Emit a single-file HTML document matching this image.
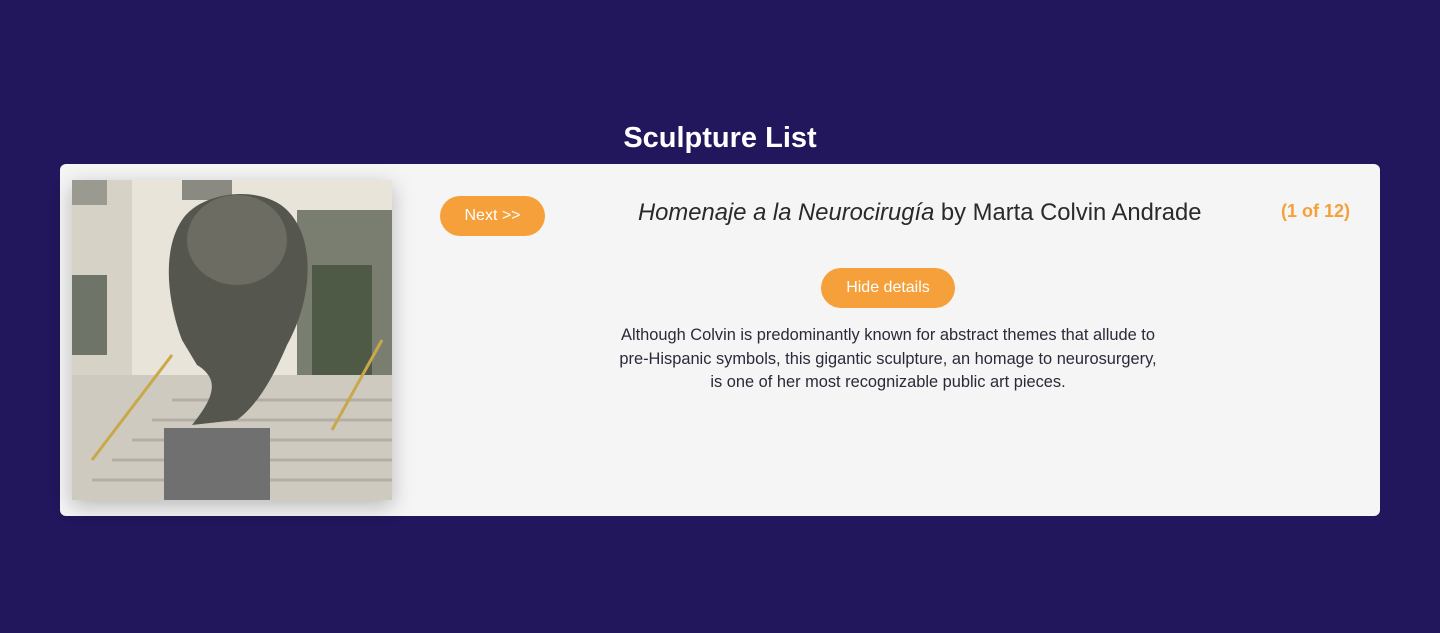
<!DOCTYPE html>
<html><head><meta charset="utf-8"><style>
html,body{margin:0;padding:0}
body{width:1440px;height:633px;background:#22165c;font-family:"Liberation Sans",sans-serif;position:relative;overflow:hidden}
h1{position:absolute;top:118px;left:0;width:1440px;text-align:center;margin:0;color:#fff;font-size:29px;font-weight:bold;line-height:40px}
.card{position:absolute;left:60px;top:164px;width:1320px;height:352px;background:#f5f5f5;border-radius:6px}
.img{position:absolute;left:12px;top:16px;width:320px;height:320px;box-shadow:0 6px 20px rgba(0,0,0,.25)}
.btn{position:absolute;background:#f5a03a;color:#fff;font-size:16px;border-radius:20px;height:40px;line-height:40px;text-align:center}
.t{position:absolute;left:578px;width:720px;top:34px;font-size:23.8px;color:#2a2a2a;line-height:30px;text-align:left;white-space:nowrap}
.c{position:absolute;left:1221px;top:37px;color:#f5a03a;font-size:18px;font-weight:bold}
.p{position:absolute;left:478px;width:700px;top:160px;text-align:center;font-size:16.4px;line-height:23.5px;color:#2a2a3a;white-space:nowrap}
</style></head><body>
<h1>Sculpture List</h1>
<div class="card">
<svg class="img" viewBox="0 0 320 320" width="320" height="320">
<rect width="320" height="320" fill="#e9e4da"/>
<rect x="0" y="0" width="60" height="320" fill="#d6d2c6"/>
<rect x="0" y="95" width="35" height="80" fill="#6f7468"/>
<rect x="0" y="0" width="35" height="25" fill="#9a9a90"/>
<rect x="110" y="0" width="50" height="20" fill="#8a8a82"/>
<rect x="225" y="30" width="95" height="180" fill="#7a7e70"/>
<rect x="240" y="85" width="60" height="120" fill="#4f5a46"/>
<rect x="0" y="195" width="320" height="125" fill="#cfcac0"/>
<g stroke="#b4afa6" stroke-width="3"><line x1="20" y1="300" x2="320" y2="300"/><line x1="40" y1="280" x2="320" y2="280"/><line x1="60" y1="260" x2="320" y2="260"/><line x1="80" y1="240" x2="320" y2="240"/><line x1="100" y1="220" x2="320" y2="220"/></g>
<path d="M110 160 C95 120 90 70 110 40 C130 10 190 5 215 30 C245 60 240 120 215 165 C200 200 185 225 165 240 L120 245 C140 220 150 200 125 185 Z" fill="#55574f"/>
<ellipse cx="165" cy="60" rx="50" ry="45" fill="#6c6c62"/>
<rect x="92" y="248" width="106" height="72" fill="#707070"/>
<path d="M20 280 L100 175 M260 250 L310 160" stroke="#c8a84a" stroke-width="3"/>
</svg>
<div class="btn" style="left:380px;top:32px;width:105px">Next &gt;&gt;</div>
<div class="t"><i>Homenaje a la Neurocirugía</i> by Marta Colvin Andrade</div>
<div class="c">(1 of 12)</div>
<div class="btn" style="left:761px;top:104px;width:134px">Hide details</div>
<div class="p">Although Colvin is predominantly known for abstract themes that allude to<br>pre-Hispanic symbols, this gigantic sculpture, an homage to neurosurgery,<br>is one of her most recognizable public art pieces.</div>
</div>
</body></html>
